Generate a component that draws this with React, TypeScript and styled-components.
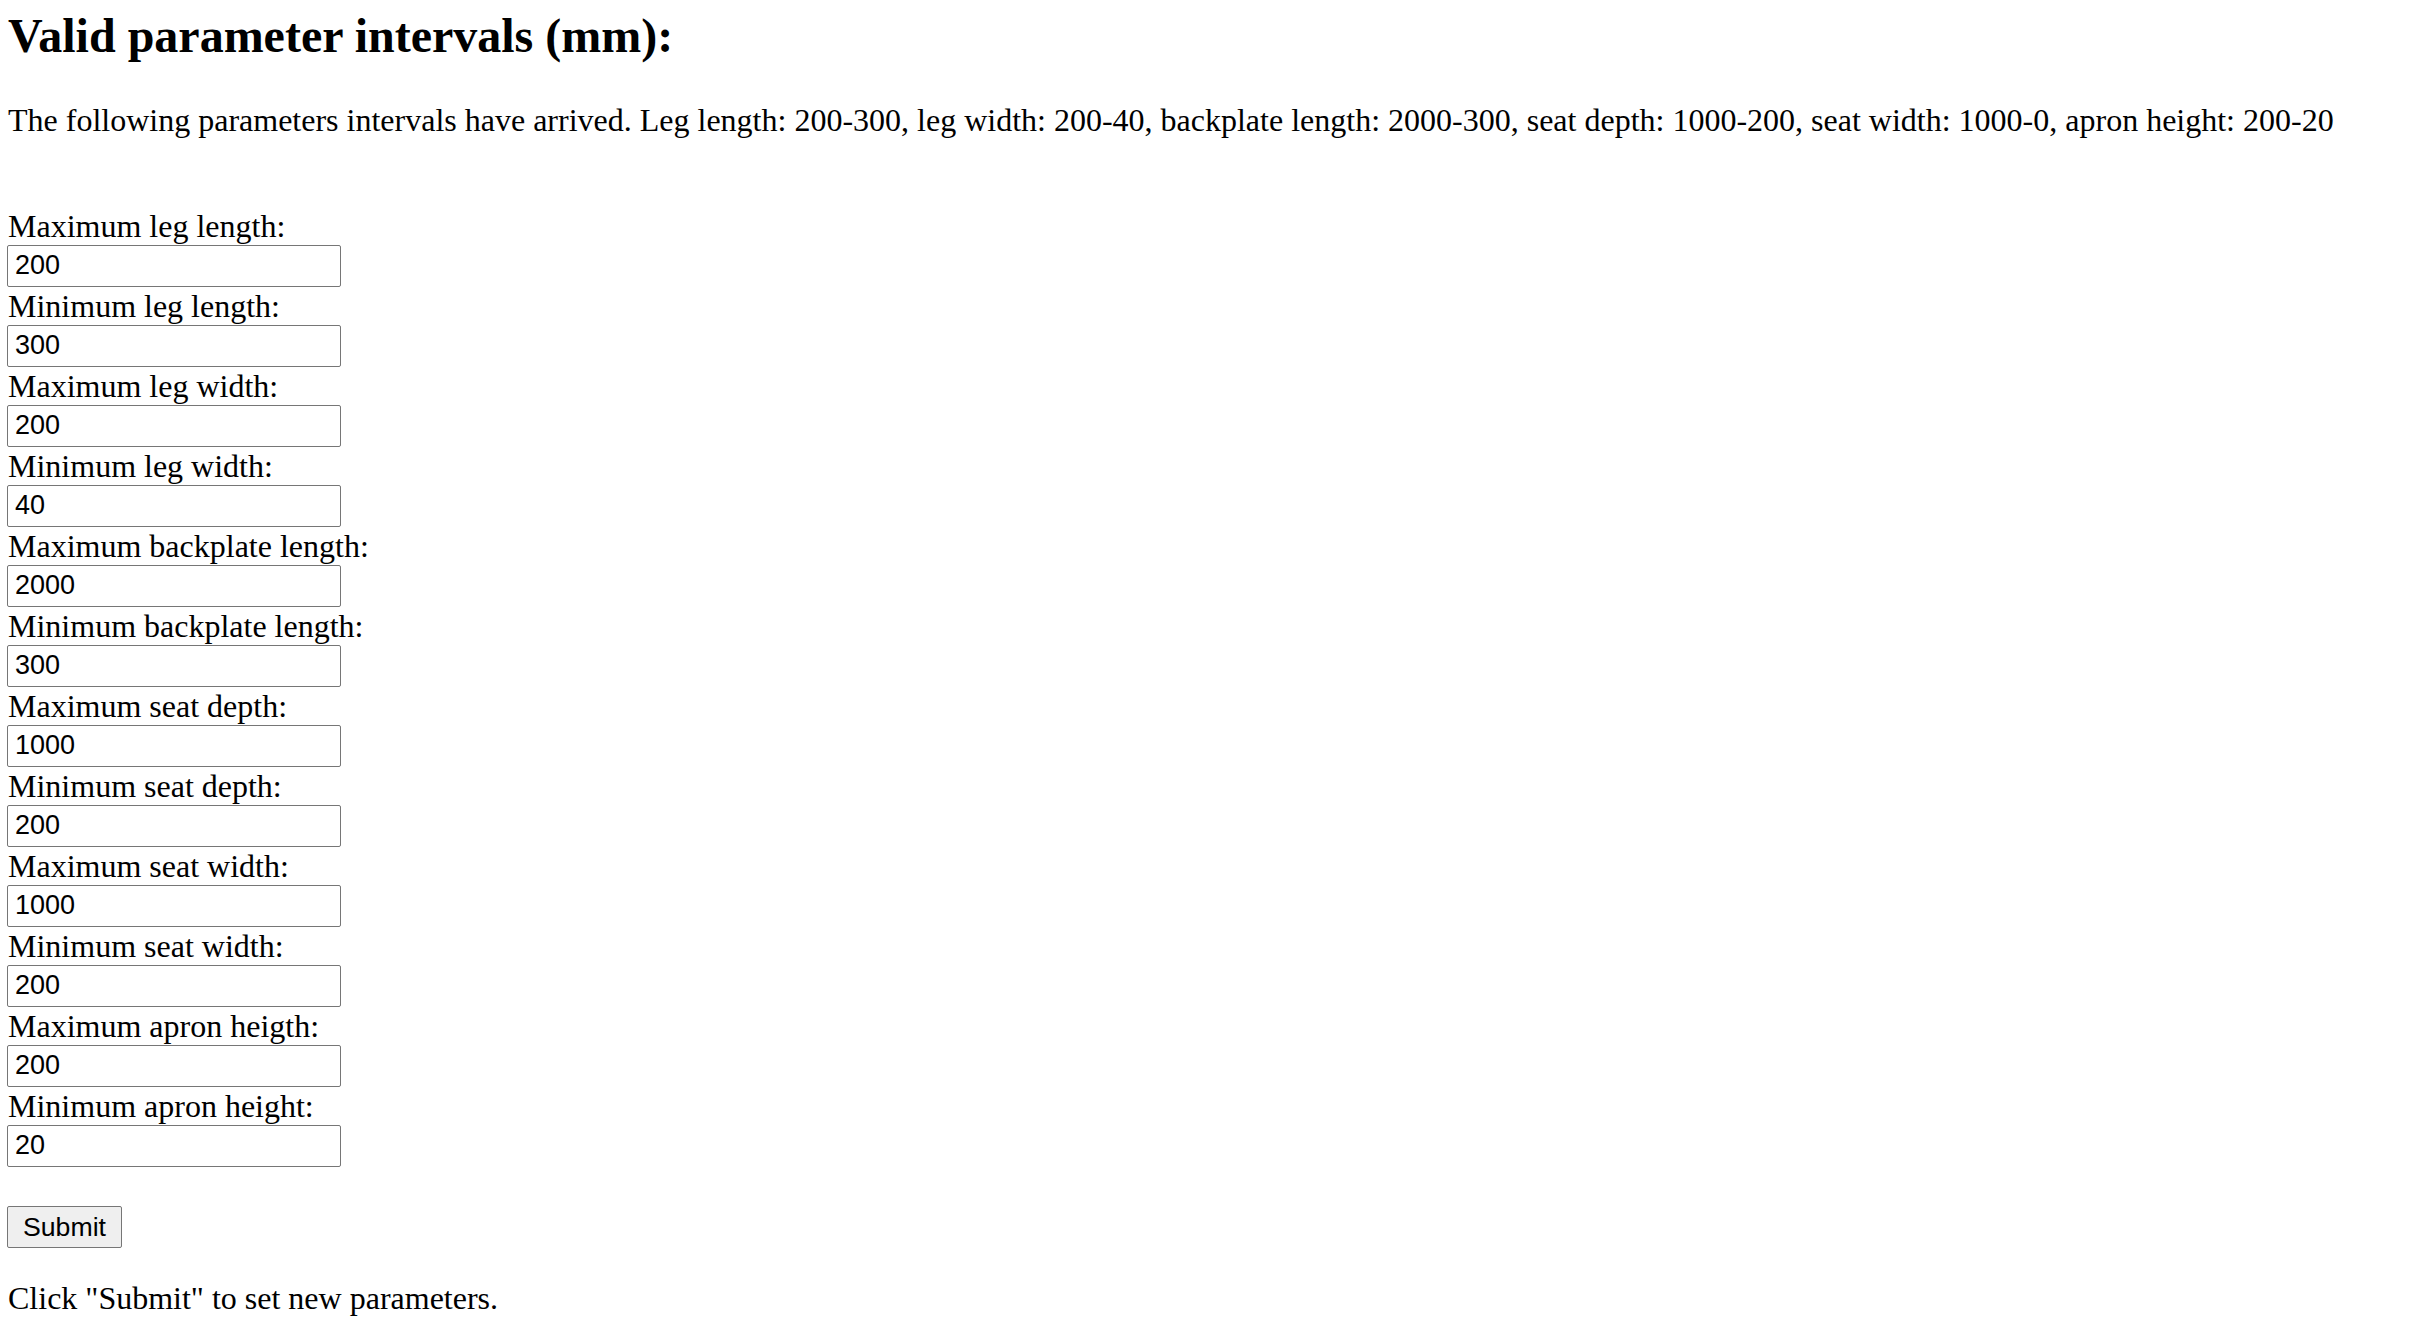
import React, { FunctionComponent } from 'react';
import styled, { createGlobalStyle } from 'styled-components';

const GlobalStyle = createGlobalStyle`
  html, body {
    margin: 0;
    padding: 0;
    background: #ffffff;
  }
  body {
    font-family: "Liberation Serif", "Times New Roman", serif;
    color: #000000;
  }
`;

const Page = styled.div`
  padding: 8px;
`;

const Heading = styled.h2`
  margin: 0 0 39px;
  font-size: 48px;
  font-weight: bold;
  line-height: 55px;
`;

const Text = styled.p<{ $gap: number }>`
  margin: 0 0 ${(p) => p.$gap}px;
  font-size: 32px;
  line-height: 37px;
`;

const Form = styled.form`
  display: flex;
  flex-direction: column;
  align-items: flex-start;
`;

const Label = styled.label`
  display: block;
  font-size: 32px;
  line-height: 37px;
  height: 37px;
`;

const Input = styled.input`
  box-sizing: border-box;
  width: 334px;
  height: 42px;
  margin: 0 0 1px -1px;
  padding: 0 7px 2px;
  border: 1px solid #767676;
  border-radius: 2px;
  font-family: "Liberation Sans", Arial, sans-serif;
  font-size: 27px;
  color: #000000;
  background: #ffffff;
  outline: none;
`;

const SubmitButton = styled.button`
  box-sizing: border-box;
  height: 42px;
  margin: 38px 0 0 -1px;
  padding: 0 15px;
  border: 1px solid #767676;
  border-radius: 2px;
  background: #efefef;
  font-family: "Liberation Sans", Arial, sans-serif;
  font-size: 26.67px;
  color: #000000;
  cursor: pointer;
`;

const Footer = styled.p`
  margin: 32px 0 0;
  font-size: 32px;
  line-height: 37px;
`;

type Field = { id: string; label: string; value: string };

const fields: Field[] = [
  { id: 'maxLegLength', label: 'Maximum leg length:', value: '200' },
  { id: 'minLegLength', label: 'Minimum leg length:', value: '300' },
  { id: 'maxLegWidth', label: 'Maximum leg width:', value: '200' },
  { id: 'minLegWidth', label: 'Minimum leg width:', value: '40' },
  { id: 'maxBackplate', label: 'Maximum backplate length:', value: '2000' },
  { id: 'minBackplate', label: 'Minimum backplate length:', value: '300' },
  { id: 'maxSeatDepth', label: 'Maximum seat depth:', value: '1000' },
  { id: 'minSeatDepth', label: 'Minimum seat depth:', value: '200' },
  { id: 'maxSeatWidth', label: 'Maximum seat width:', value: '1000' },
  { id: 'minSeatWidth', label: 'Minimum seat width:', value: '200' },
  { id: 'maxApron', label: 'Maximum apron heigth:', value: '200' },
  { id: 'minApron', label: 'Minimum apron height:', value: '20' },
];

const App: FunctionComponent = () => {
  const handleSubmit = (e: React.FormEvent) => {
    e.preventDefault();
  };

  return (
    <Page>
      <GlobalStyle />
      <Heading>Valid parameter intervals (mm):</Heading>
      <Text $gap={69}>
        The following parameters intervals have arrived. Leg length: 200-300, leg width: 200-40,
        backplate length: 2000-300, seat depth: 1000-200, seat width: 1000-0, apron height: 200-20
      </Text>
      <Form onSubmit={handleSubmit}>
        {fields.map(({ id, label, value }) => (
          <React.Fragment key={id}>
            <Label htmlFor={id}>{label}</Label>
            <Input type="text" id={id} name={id} defaultValue={value} />
          </React.Fragment>
        ))}
        <SubmitButton type="submit">Submit</SubmitButton>
      </Form>
      <Footer>Click &quot;Submit&quot; to set new parameters.</Footer>
    </Page>
  );
};

export default App;
